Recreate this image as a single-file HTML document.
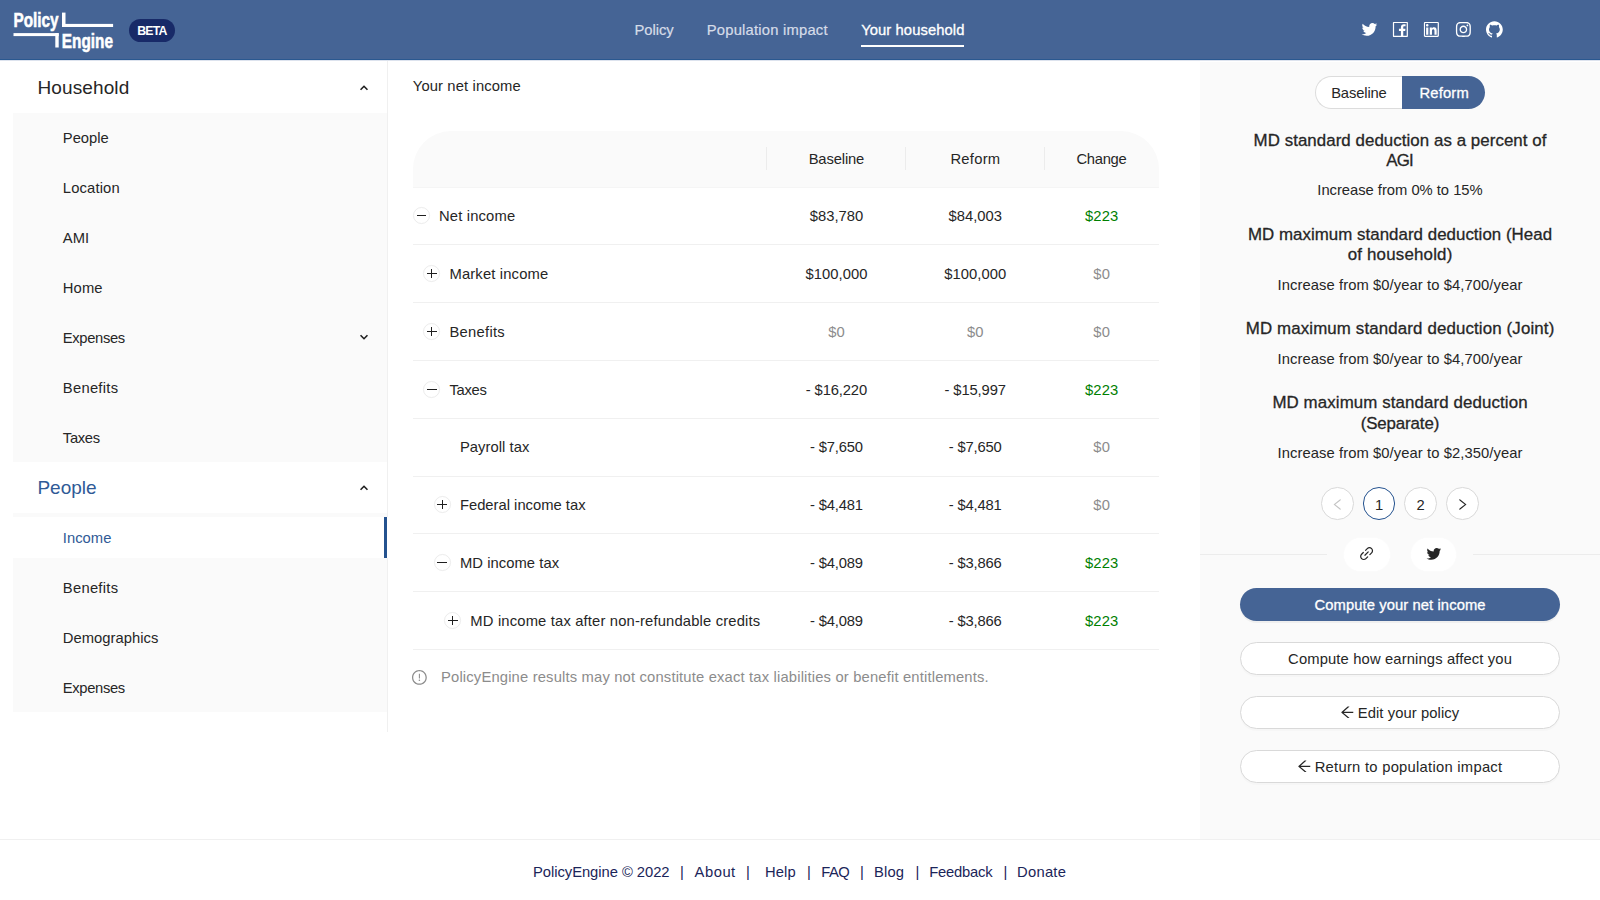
<!DOCTYPE html>
<html lang="en"><head><meta charset="utf-8"><title>PolicyEngine - Your household</title>
<style>
*{margin:0;padding:0}
html,body{width:1600px;height:900px;overflow:hidden;background:#fff}
body{position:relative;font-family:"Liberation Sans", sans-serif;font-size:14.77px;color:#262626}
header,aside,main,section,footer{position:absolute;display:block}
.hdr{left:0;top:0;width:1600px;height:60px;background:#456495;border-bottom:1px solid #2a5890;box-sizing:border-box}
.side{left:0;top:60px;width:388px;height:779px}
.main{left:388px;top:60px;width:812px;height:779px}
.rp{left:1200px;top:60px;width:400px;height:779px;background:linear-gradient(#fff 2px,#fafafa 2px)}
.ft{left:0;top:839px;width:1600px;height:61px;border-top:1px solid #f0f0f0;box-sizing:border-box}
.t{position:absolute;white-space:pre;line-height:1;display:block}
.r{position:absolute}
.ic{position:absolute;display:block;overflow:visible}
.xb{position:absolute;width:16.8px;height:16.8px;border:1px solid #ececec;border-radius:50%;box-sizing:border-box;background:#fff}
.xb i{position:absolute;background:#1f1f1f;display:block}
.xb .hz{left:2.6px;right:2.6px;top:6.75px;height:1.3px}
.xb .vt{top:2.6px;bottom:2.6px;left:6.75px;width:1.3px}
</style></head>
<body>
<header class="hdr"><svg class="ic" style="left:12px;top:10px;width:104px;height:44px" viewBox="12 10 104 44">
<g fill="#fff" stroke="#fff" stroke-width="0" font-family="Liberation Sans, sans-serif" font-weight="700" font-size="20.2px">
<text x="13.4" y="27" textLength="45.2" lengthAdjust="spacingAndGlyphs" stroke-width="0.55">Policy</text>
<text x="61.8" y="47.5" textLength="51.2" lengthAdjust="spacingAndGlyphs" stroke-width="0.55">Engine</text>
<rect x="62" y="12.6" width="3.5" height="14.4"/><rect x="62" y="23.9" width="51.1" height="3.1"/>
<rect x="13.5" y="33.1" width="45.2" height="3"/><rect x="55.3" y="33.1" width="3.4" height="14.4"/>
</g></svg><div class="r" style="left:129.30px;top:19.20px;width:45.90px;height:22.60px;background:#182a68;border-radius:12px"></div><span class="t" style="left:137.22px;top:25.00px;font-size:12.3px;font-weight:700;color:#fff;letter-spacing:-0.800px;">BETA</span><span class="t" style="left:634.60px;top:23.00px;color:#d6dce8;letter-spacing:-0.078px;-webkit-text-stroke:0.2px currentColor;">Policy</span><span class="t" style="left:706.80px;top:23.00px;color:#d6dce8;letter-spacing:0.209px;-webkit-text-stroke:0.2px currentColor;">Population impact</span><span class="t" style="left:861.20px;top:23.00px;-webkit-text-stroke:0.3px currentColor;color:#fff;letter-spacing:0.089px;">Your household</span><div class="r" style="left:861.40px;top:44.70px;width:103.00px;height:2.20px;background:#fff;"></div><svg class="ic" style="left:1360.60px;top:21.10px;width:16.8px;height:16.8px;" viewBox="64 64 896 896" fill="#fff"><path d="M928 254.3c-30.600 13.200-63.900 22.700-98.200 26.400a170.100 170.100 0 0 0 75-94 336.640 336.640 0 0 1-108.200 41.200A170.100 170.100 0 0 0 672 174c-94.500 0-170.500 76.600-170.500 170.600 0 13.200 1.600 26.400 4.200 39.100-141.500-7.400-267.700-75-351.600-178.500a169.320 169.320 0 0 0-23.200 86.100c0 59.200 30.100 111.400 76 142.100a172 172 0 0 1-77.100-21.700v2.100c0 82.900 58.600 151.600 136.700 167.400a180.600 180.600 0 0 1-44.900 5.800c-11.100 0-21.600-1.100-32.200-2.600C211 652 273.900 701.100 348.800 702.700c-58.600 45.900-132 72.900-211.700 72.900-14.300 0-27.500-.5-41.200-2.100C171.500 822 261.200 850 357.800 850 671.400 850 843 590.200 843 364.700c0-7.400 0-14.800-.5-22.200 33.200-24.300 62.300-54.400 85.500-88.200z"/></svg><svg class="ic" style="left:1392.10px;top:21.10px;width:16.8px;height:16.8px;" viewBox="64 64 896 896" fill="#fff"><path d="M880 112H144c-17.700 0-32 14.300-32 32v736c0 17.700 14.300 32 32 32h736c17.700 0 32-14.300 32-32V144c0-17.700-14.300-32-32-32zm-32 736H663.900V602.200h104l15.600-120.700H663.900v-77.100c0-35 9.700-58.800 59.800-58.800h63.900v-108c-11.100-1.500-49-4.800-93.200-4.800-92.200 0-155.300 56.300-155.300 159.600v89H434.900v120.700h104.300V848H176V176h672v672z"/></svg><svg class="ic" style="left:1423.40px;top:21.10px;width:16.8px;height:16.8px;" viewBox="64 64 896 896" fill="#fff"><path d="M847.700 112H176.300c-35.500 0-64.300 28.800-64.300 64.300v671.400c0 35.500 28.800 64.300 64.300 64.300h671.400c35.500 0 64.300-28.800 64.300-64.300V176.300c0-35.500-28.800-64.300-64.300-64.300zm0 736c-447.800-.1-671.700-.2-671.700-.3.100-447.800.2-671.700.3-671.700 447.800.1 671.700.2 671.700.3-.1 447.800-.2 671.700-.3 671.700zM230.600 411.900h118.700v381.800H230.600zm59.400-52.200c37.900 0 68.800-30.800 68.800-68.800a68.800 68.800 0 1 0-137.600 0c0 38 30.800 68.800 68.800 68.800zm252.300 245.100c0-49.800 9.500-98 71.200-98 60.800 0 61.700 56.900 61.700 101.200v185.700h118.600V584.300c0-102.800-22.200-181.900-142.300-181.900-57.700 0-96.400 31.700-112.300 61.700h-1.600v-52.200H423.700v381.800h118.600V604.800z"/></svg><svg class="ic" style="left:1454.80px;top:21.10px;width:16.8px;height:16.8px;" viewBox="64 64 896 896" fill="#fff"><path d="M512 306.900c-113.500 0-205.100 91.600-205.100 205.100S398.500 717.100 512 717.100 717.100 625.500 717.100 512 625.500 306.900 512 306.900zm0 338.400c-73.400 0-133.300-59.900-133.300-133.300S438.600 378.700 512 378.700 645.300 438.600 645.300 512 585.400 645.300 512 645.300zm213.500-394.600c-26.500 0-47.900 21.400-47.900 47.900s21.400 47.900 47.900 47.900 47.900-21.300 47.900-47.900a47.840 47.840 0 0 0-47.900-47.900zM911.800 512c0-55.200.5-109.900-2.600-165-3.100-64-17.700-120.800-64.500-167.600-46.900-46.900-103.600-61.400-167.600-64.500-55.200-3.100-109.900-2.600-165-2.600-55.200 0-109.900-.5-165 2.600-64 3.100-120.800 17.700-167.600 64.500C132.600 226.300 118.100 283 115 347c-3.100 55.200-2.600 109.900-2.600 165s-.5 109.900 2.600 165c3.100 64 17.700 120.800 64.500 167.600 46.900 46.900 103.600 61.400 167.600 64.500 55.200 3.100 109.900 2.600 165 2.600 55.200 0 109.900.5 165-2.600 64-3.100 120.800-17.700 167.600-64.500 46.900-46.900 61.400-103.600 64.500-167.600 3.200-55.100 2.600-109.800 2.600-165zm-88 235.800c-7.300 18.200-16.100 31.800-30.200 45.800-14.100 14.100-27.600 22.900-45.800 30.200C695.200 844.700 570.300 840 512 840c-58.300 0-183.300 4.700-235.900-16.100-18.200-7.300-31.800-16.100-45.800-30.200-14.100-14.100-22.900-27.600-30.200-45.800C179.300 695.200 184 570.300 184 512c0-58.300-4.700-183.300 16.100-235.900 7.300-18.200 16.100-31.800 30.200-45.800s27.600-22.900 45.800-30.200C328.700 179.300 453.700 184 512 184s183.300-4.700 235.900 16.100c18.200 7.300 31.800 16.100 45.800 30.200 14.100 14.100 22.900 27.600 30.200 45.800C844.700 328.700 840 453.700 840 512c0 58.300 4.700 183.200-16.200 235.800z"/></svg><svg class="ic" style="left:1485.90px;top:21.10px;width:16.8px;height:16.8px;" viewBox="64 64 896 896" fill="#fff"><path d="M511.600 76.300C264.300 76.200 64 276.400 64 523.500 64 718.900 189.300 885 363.800 946c23.500 5.900 19.900-10.800 19.900-22.200v-77.500c-135.700 15.900-141.200-73.900-150.300-88.900C215 726 171.500 718 184.500 703c30.900-15.900 62.400 4 98.900 57.900 26.400 39.100 77.900 32.500 104 26 5.700-23.500 17.900-44.500 34.700-60.800-140.600-25.200-199.200-111-199.200-213 0-49.500 16.300-95 48.300-131.700-20.400-60.500 1.900-112.300 4.900-120 58.100-5.200 118.500 41.600 123.200 45.300 33-8.900 70.700-13.600 112.900-13.600 42.400 0 80.200 4.900 113.500 13.900 11.300-8.600 67.300-48.800 121.300-43.900 2.900 7.700 24.700 58.300 5.500 118 32.400 36.800 48.900 82.700 48.900 132.300 0 102.200-59 188.100-200 212.900a127.500 127.500 0 0 1 38.100 91v112.500c.8 9 0 17.900 15 17.900 177.100-59.700 304.600-227 304.600-424.100 0-247.200-200.400-447.300-447.500-447.300z"/></svg></header>
<div class="r" style="left:0;top:60px;width:1600px;height:1px;background:#dde3ee;z-index:5"></div>
<aside class="side"><div class="r" style="left:387.00px;top:0.00px;width:1.00px;height:672.00px;background:#f0f0f0;"></div><div class="r" style="left:13.00px;top:52.50px;width:374.00px;height:349.50px;background:#fafafa;"></div><div class="r" style="left:13.00px;top:452.50px;width:374.00px;height:199.50px;background:#fafafa;"></div><div class="r" style="left:13.00px;top:457.00px;width:374.50px;height:41.00px;background:#fff;"></div><div class="r" style="left:384.40px;top:456.60px;width:3.00px;height:41.70px;background:#24528f;"></div><span class="t h" style="left:37.40px;top:18.00px;font-size:19.0px;letter-spacing:0.128px;">Household</span><svg class="ic" style="left:357.60px;top:21.90px;width:12px;height:12px" viewBox="-6 -6 12 12"><polyline points="-3.45,1.725 0,-1.725 3.45,1.725" fill="none" stroke="#1f1f1f" stroke-width="1.6"/></svg><span class="t" style="left:62.80px;top:71.00px;letter-spacing:0.000px;">People</span><span class="t" style="left:62.80px;top:121.00px;letter-spacing:0.150px;">Location</span><span class="t" style="left:62.80px;top:171.00px;letter-spacing:-0.016px;">AMI</span><span class="t" style="left:62.80px;top:221.00px;letter-spacing:0.109px;">Home</span><span class="t" style="left:62.80px;top:271.00px;letter-spacing:-0.348px;">Expenses</span><span class="t" style="left:62.80px;top:321.00px;letter-spacing:0.273px;">Benefits</span><span class="t" style="left:62.80px;top:371.00px;letter-spacing:-0.303px;">Taxes</span><svg class="ic" style="left:357.60px;top:270.70px;width:12px;height:12px" viewBox="-6 -6 12 12"><polyline points="-3.45,-1.725 0,1.725 3.45,-1.725" fill="none" stroke="#1f1f1f" stroke-width="1.6"/></svg><span class="t h" style="left:37.40px;top:418.00px;font-size:19.0px;color:#305a96;letter-spacing:0.000px;">People</span><svg class="ic" style="left:357.60px;top:422.00px;width:12px;height:12px" viewBox="-6 -6 12 12"><polyline points="-3.45,1.725 0,-1.725 3.45,1.725" fill="none" stroke="#1f1f1f" stroke-width="1.6"/></svg><span class="t" style="left:62.80px;top:471.00px;color:#305a96;letter-spacing:0.026px;">Income</span><span class="t" style="left:62.80px;top:521.00px;letter-spacing:0.273px;">Benefits</span><span class="t" style="left:62.80px;top:571.00px;letter-spacing:0.030px;">Demographics</span><span class="t" style="left:62.80px;top:621.00px;letter-spacing:-0.348px;">Expenses</span></aside>
<main class="main"><span class="t" style="left:24.80px;top:19.00px;letter-spacing:0.128px;">Your net income</span><div class="r" style="left:24.50px;top:70.50px;width:746.00px;height:57.00px;background:#fafafa;border-radius:38px 38px 0 0"></div><div class="r" style="left:378.00px;top:87.00px;width:1.00px;height:23.00px;background:#ececec;"></div><div class="r" style="left:517.00px;top:87.00px;width:1.00px;height:23.00px;background:#ececec;"></div><div class="r" style="left:656.00px;top:87.00px;width:1.00px;height:23.00px;background:#ececec;"></div><span class="t th" style="left:420.64px;top:92.00px;letter-spacing:-0.133px;">Baseline</span><span class="t th" style="left:562.46px;top:92.00px;letter-spacing:0.250px;">Reform</span><span class="t th" style="left:688.39px;top:92.00px;letter-spacing:-0.263px;">Change</span><div class="r" style="left:24.50px;top:127.00px;width:746.00px;height:1.00px;background:#f5f5f5;"></div><div class="r" style="left:24.50px;top:184.25px;width:746.00px;height:1.00px;background:#f0f0f0;"></div><div class="r" style="left:24.50px;top:241.75px;width:746.00px;height:1.00px;background:#f0f0f0;"></div><div class="r" style="left:24.50px;top:299.50px;width:746.00px;height:1.00px;background:#f0f0f0;"></div><div class="r" style="left:24.50px;top:357.50px;width:746.00px;height:1.00px;background:#f0f0f0;"></div><div class="r" style="left:24.50px;top:415.50px;width:746.00px;height:1.00px;background:#f0f0f0;"></div><div class="r" style="left:24.50px;top:473.25px;width:746.00px;height:1.00px;background:#f0f0f0;"></div><div class="r" style="left:24.50px;top:530.75px;width:746.00px;height:1.00px;background:#f0f0f0;"></div><div class="r" style="left:24.50px;top:588.75px;width:746.00px;height:1.00px;background:#f0f0f0;"></div><span class="xb" style="left:25.00px;top:147.10px"><i class="hz"></i></span><span class="t" style="left:51.00px;top:149.00px;letter-spacing:0.158px;">Net income</span><span class="t" style="left:421.71px;top:149.00px;letter-spacing:0.033px;">$83,780</span><span class="t" style="left:560.51px;top:149.00px;letter-spacing:0.033px;">$84,003</span><span class="t" style="left:697.00px;top:149.00px;color:green;letter-spacing:0.113px;">$223</span><span class="xb" style="left:35.45px;top:205.10px"><i class="hz"></i><i class="vt"></i></span><span class="t" style="left:61.45px;top:207.00px;letter-spacing:0.162px;">Market income</span><span class="t" style="left:417.55px;top:207.00px;letter-spacing:0.043px;">$100,000</span><span class="t" style="left:556.35px;top:207.00px;letter-spacing:0.043px;">$100,000</span><span class="t" style="left:705.33px;top:207.00px;color:#8c8c8c;letter-spacing:0.109px;">$0</span><span class="xb" style="left:35.45px;top:263.10px"><i class="hz"></i><i class="vt"></i></span><span class="t" style="left:61.45px;top:265.00px;letter-spacing:0.273px;">Benefits</span><span class="t" style="left:440.23px;top:265.00px;color:#8c8c8c;letter-spacing:0.109px;">$0</span><span class="t" style="left:579.03px;top:265.00px;color:#8c8c8c;letter-spacing:0.109px;">$0</span><span class="t" style="left:705.33px;top:265.00px;color:#8c8c8c;letter-spacing:0.109px;">$0</span><span class="xb" style="left:35.45px;top:321.10px"><i class="hz"></i></span><span class="t" style="left:61.45px;top:323.00px;letter-spacing:-0.303px;">Taxes</span><span class="t" style="left:417.81px;top:323.00px;letter-spacing:-0.128px;">- $16,220</span><span class="t" style="left:556.61px;top:323.00px;letter-spacing:-0.128px;">- $15,997</span><span class="t" style="left:697.00px;top:323.00px;color:green;letter-spacing:0.113px;">$223</span><span class="t" style="left:71.90px;top:380.00px;letter-spacing:0.055px;">Payroll tax</span><span class="t" style="left:421.96px;top:380.00px;letter-spacing:-0.158px;">- $7,650</span><span class="t" style="left:560.76px;top:380.00px;letter-spacing:-0.158px;">- $7,650</span><span class="t" style="left:705.33px;top:380.00px;color:#8c8c8c;letter-spacing:0.109px;">$0</span><span class="xb" style="left:45.90px;top:436.10px"><i class="hz"></i><i class="vt"></i></span><span class="t" style="left:71.90px;top:438.00px;letter-spacing:0.006px;">Federal income tax</span><span class="t" style="left:421.96px;top:438.00px;letter-spacing:-0.158px;">- $4,481</span><span class="t" style="left:560.76px;top:438.00px;letter-spacing:-0.158px;">- $4,481</span><span class="t" style="left:705.33px;top:438.00px;color:#8c8c8c;letter-spacing:0.109px;">$0</span><span class="xb" style="left:45.90px;top:494.10px"><i class="hz"></i></span><span class="t" style="left:71.90px;top:496.00px;letter-spacing:0.058px;">MD income tax</span><span class="t" style="left:421.96px;top:496.00px;letter-spacing:-0.158px;">- $4,089</span><span class="t" style="left:560.76px;top:496.00px;letter-spacing:-0.158px;">- $3,866</span><span class="t" style="left:697.00px;top:496.00px;color:green;letter-spacing:0.113px;">$223</span><span class="xb" style="left:56.35px;top:552.10px"><i class="hz"></i><i class="vt"></i></span><span class="t" style="left:82.35px;top:554.00px;letter-spacing:0.163px;">MD income tax after non-refundable credits</span><span class="t" style="left:421.96px;top:554.00px;letter-spacing:-0.158px;">- $4,089</span><span class="t" style="left:560.76px;top:554.00px;letter-spacing:-0.158px;">- $3,866</span><span class="t" style="left:697.00px;top:554.00px;color:green;letter-spacing:0.113px;">$223</span><svg class="ic" style="left:24.40px;top:610.10px;width:14.8px;height:14.8px;" viewBox="64 64 896 896" fill="#8c8c8c"><path d="M512 64C264.600 64 64 264.600 64 512s200.600 448 448 448 448-200.600 448-448S759.400 64 512 64zm0 820c-205.400 0-372-166.600-372-372s166.600-372 372-372 372 166.600 372 372-166.600 372-372 372zM464 688a48 48 0 1 0 96 0 48 48 0 1 0-96 0zm24-112h48c4.400 0 8-3.600 8-8V296c0-4.400-3.600-8-8-8h-48c-4.400 0-8 3.600-8 8v272c0 4.400 3.600 8 8 8z"/></svg><span class="t" style="left:53.00px;top:610.00px;color:#8c8c8c;letter-spacing:0.167px;">PolicyEngine results may not constitute exact tax liabilities or benefit entitlements.</span></main>
<section class="rp"><div class="r" style="left:115.00px;top:16.30px;width:88.00px;height:33.00px;background:#fff;border:1px solid #dcdcdc;border-right:0;border-radius:17px 0 0 17px;box-sizing:border-box"></div><div class="r" style="left:202.20px;top:16.30px;width:82.80px;height:33.00px;background:#456495;border-radius:0 17px 17px 0"></div><span class="t" style="left:131.14px;top:26.00px;letter-spacing:-0.133px;">Baseline</span><span class="t" style="left:219.39px;top:26.00px;-webkit-text-stroke:0.3px currentColor;color:#fff;letter-spacing:0.201px;">Reform</span><span class="t pt" style="left:53.57px;top:73.00px;font-size:16.88px;-webkit-text-stroke:0.3px currentColor;letter-spacing:0.065px;">MD standard deduction as a percent of</span><span class="t pt" style="left:186.29px;top:93.00px;font-size:16.88px;-webkit-text-stroke:0.3px currentColor;letter-spacing:-0.811px;">AGI</span><span class="t pt" style="left:47.97px;top:167.00px;font-size:16.88px;-webkit-text-stroke:0.3px currentColor;letter-spacing:0.041px;">MD maximum standard deduction (Head</span><span class="t pt" style="left:147.67px;top:187.00px;font-size:16.88px;-webkit-text-stroke:0.3px currentColor;letter-spacing:0.207px;">of household)</span><span class="t pt" style="left:45.71px;top:261.00px;font-size:16.88px;-webkit-text-stroke:0.3px currentColor;letter-spacing:0.138px;">MD maximum standard deduction (Joint)</span><span class="t pt" style="left:72.38px;top:335.00px;font-size:16.88px;-webkit-text-stroke:0.3px currentColor;letter-spacing:0.113px;">MD maximum standard deduction</span><span class="t pt" style="left:160.74px;top:356.00px;font-size:16.88px;-webkit-text-stroke:0.3px currentColor;letter-spacing:-0.126px;">(Separate)</span><span class="t" style="left:117.33px;top:123.00px;letter-spacing:-0.021px;">Increase from 0% to 15%</span><span class="t" style="left:77.47px;top:218.00px;letter-spacing:0.083px;">Increase from $0/year to $4,700/year</span><span class="t" style="left:77.47px;top:292.00px;letter-spacing:0.083px;">Increase from $0/year to $4,700/year</span><span class="t" style="left:77.47px;top:386.00px;letter-spacing:0.083px;">Increase from $0/year to $2,350/year</span><div class="r" style="left:121.20px;top:427.20px;width:32.60px;height:32.60px;background:#fff;border:1px solid #d9d9d9;border-radius:50%;box-sizing:border-box"></div><div class="r" style="left:162.70px;top:427.20px;width:32.60px;height:32.60px;background:#fff;border:1px solid #24528f;border-radius:50%;box-sizing:border-box"></div><div class="r" style="left:204.30px;top:427.20px;width:32.60px;height:32.60px;background:#fff;border:1px solid #d9d9d9;border-radius:50%;box-sizing:border-box"></div><div class="r" style="left:246.20px;top:427.20px;width:32.60px;height:32.60px;background:#fff;border:1px solid #d9d9d9;border-radius:50%;box-sizing:border-box"></div><svg class="ic" style="left:130.90px;top:438.00px;width:13.0px;height:13.0px;" viewBox="64 64 896 896" fill="#c4c4c4"><path d="M724 218.300V141c0-6.700-7.700-10.400-12.900-6.300L260.300 486.800a31.860 31.860 0 0 0 0 50.300l450.800 352.100c5.300 4.100 12.900.4 12.900-6.300v-77.300c0-4.900-2.300-9.600-6.100-12.600l-360-281 360-281.100c3.800-3 6.100-7.700 6.100-12.600z"/></svg><svg class="ic" style="left:256.20px;top:438.00px;width:13.0px;height:13.0px;" viewBox="64 64 896 896" fill="#262626"><path d="M765.700 486.800L314.900 134.700A7.970 7.970 0 0 0 302 141v77.300c0 4.900 2.300 9.600 6.100 12.600l360 281.100-360 281.100c-3.900 3-6.100 7.700-6.100 12.600V883c0 6.700 7.700 10.400 12.900 6.300l450.800-352.100a31.960 31.960 0 0 0 0-50.400z"/></svg><span class="t" style="left:174.89px;top:438.00px;letter-spacing:0.109px;">1</span><span class="t" style="left:216.49px;top:438.00px;letter-spacing:0.109px;">2</span><div class="r" style="left:0.00px;top:494.00px;width:127.00px;height:1.00px;background:#ececec;"></div><div class="r" style="left:273.00px;top:494.00px;width:127.00px;height:1.00px;background:#ececec;"></div><div class="r" style="left:143.80px;top:477.60px;width:45.80px;height:33.20px;background:#fff;border-radius:17px;box-shadow:0 0 2px rgba(255,255,255,.9)"></div><div class="r" style="left:210.50px;top:477.60px;width:45.80px;height:33.20px;background:#fff;border-radius:17px;box-shadow:0 0 2px rgba(255,255,255,.9)"></div><svg class="ic" style="left:159.20px;top:486.20px;width:15.2px;height:15.2px;" viewBox="64 64 896 896" fill="#262626"><path d="M574 665.400a8.030 8.030 0 0 0-11.300 0L446.500 781.600c-53.800 53.800-144.600 59.500-204 0-59.500-59.500-53.800-150.200 0-204l116.200-116.200c3.100-3.100 3.100-8.200 0-11.300l-39.800-39.800a8.030 8.030 0 0 0-11.300 0L191.400 526.500c-84.600 84.600-84.600 221.500 0 306s221.500 84.600 306 0l116.200-116.200c3.100-3.100 3.100-8.200 0-11.300L574 665.400zm258.600-474c-84.600-84.600-221.500-84.600-306 0L410.300 307.600a8.030 8.030 0 0 0 0 11.300l39.700 39.700c3.100 3.100 8.200 3.100 11.300 0l116.200-116.200c53.800-53.800 144.600-59.500 204 0 59.500 59.500 53.800 150.200 0 204L665.300 562.600a8.030 8.030 0 0 0 0 11.300l39.800 39.800c3.100 3.100 8.200 3.100 11.300 0l116.200-116.200c84.500-84.600 84.500-221.500 0-306.100zM610.100 372.300a8.030 8.030 0 0 0-11.300 0L372.300 598.700a8.030 8.030 0 0 0 0 11.300l39.600 39.600c3.100 3.100 8.200 3.100 11.300 0l226.400-226.400c3.100-3.100 3.100-8.200 0-11.300l-39.500-39.600z"/></svg><svg class="ic" style="left:225.55px;top:485.95px;width:15.7px;height:15.7px;" viewBox="64 64 896 896" fill="#262626"><path d="M928 254.3c-30.600 13.200-63.900 22.700-98.200 26.400a170.100 170.100 0 0 0 75-94 336.640 336.640 0 0 1-108.200 41.200A170.100 170.100 0 0 0 672 174c-94.500 0-170.500 76.600-170.500 170.600 0 13.200 1.600 26.400 4.200 39.100-141.500-7.400-267.700-75-351.600-178.500a169.320 169.320 0 0 0-23.200 86.100c0 59.200 30.100 111.400 76 142.100a172 172 0 0 1-77.100-21.700v2.100c0 82.900 58.600 151.600 136.700 167.400a180.600 180.600 0 0 1-44.900 5.800c-11.100 0-21.600-1.100-32.200-2.600C211 652 273.900 701.100 348.800 702.700c-58.600 45.900-132 72.900-211.700 72.900-14.300 0-27.500-.5-41.200-2.100C171.500 822 261.200 850 357.800 850 671.400 850 843 590.200 843 364.700c0-7.400 0-14.800-.5-22.200 33.200-24.300 62.300-54.400 85.500-88.200z"/></svg><div class="r" style="left:40.00px;top:527.60px;width:320.00px;height:33.00px;background:#456495;border-radius:17px;box-shadow:0 2px 0 rgba(0,0,0,.045)"></div><div class="r" style="left:40.00px;top:581.80px;width:320.00px;height:32.80px;background:#fff;border:1px solid #d9d9d9;border-radius:17px;box-sizing:border-box;box-shadow:0 2px 0 rgba(0,0,0,.015)"></div><div class="r" style="left:40.00px;top:636.10px;width:320.00px;height:32.80px;background:#fff;border:1px solid #d9d9d9;border-radius:17px;box-sizing:border-box;box-shadow:0 2px 0 rgba(0,0,0,.015)"></div><div class="r" style="left:40.00px;top:690.10px;width:320.00px;height:32.80px;background:#fff;border:1px solid #d9d9d9;border-radius:17px;box-sizing:border-box;box-shadow:0 2px 0 rgba(0,0,0,.015)"></div><span class="t" style="left:114.44px;top:538.00px;-webkit-text-stroke:0.3px currentColor;color:#fff;letter-spacing:0.093px;">Compute your net income</span><span class="t" style="left:88.10px;top:592.00px;letter-spacing:0.136px;">Compute how earnings affect you</span><svg class="ic" style="left:139.80px;top:645.30px;width:14.6px;height:14.6px;" viewBox="64 64 896 896" fill="#262626"><path d="M872 474H286.900l350.200-304c5.600-4.900 2.200-14-5.200-14h-88.500c-3.900 0-7.600 1.400-10.500 3.900L155 487.800a31.960 31.960 0 0 0 0 48.300L535.100 866c1.500 1.300 3.300 2 5.200 2h91.500c7.400 0 10.800-9.200 5.200-14L286.900 550H872c4.400 0 8-3.600 8-8v-60c0-4.400-3.600-8-8-8z"/></svg><span class="t" style="left:157.70px;top:646.00px;letter-spacing:0.091px;">Edit your policy</span><svg class="ic" style="left:97.20px;top:699.30px;width:14.6px;height:14.6px;" viewBox="64 64 896 896" fill="#262626"><path d="M872 474H286.900l350.200-304c5.600-4.900 2.200-14-5.200-14h-88.500c-3.900 0-7.600 1.400-10.500 3.900L155 487.800a31.960 31.960 0 0 0 0 48.300L535.100 866c1.500 1.300 3.300 2 5.200 2h91.500c7.400 0 10.800-9.200 5.200-14L286.900 550H872c4.400 0 8-3.600 8-8v-60c0-4.400-3.600-8-8-8z"/></svg><span class="t" style="left:114.70px;top:700.00px;letter-spacing:0.263px;">Return to population impact</span></section>
<footer class="ft"><span class="t" style="left:533.00px;top:25.00px;color:#1b2559;letter-spacing:-0.041px;">PolicyEngine © 2022</span><span class="t" style="left:694.60px;top:25.00px;color:#1b2559;letter-spacing:0.503px;">About</span><span class="t" style="left:764.90px;top:25.00px;color:#1b2559;letter-spacing:0.145px;">Help</span><span class="t" style="left:821.20px;top:25.00px;color:#1b2559;letter-spacing:-0.464px;">FAQ</span><span class="t" style="left:873.90px;top:25.00px;color:#1b2559;letter-spacing:0.203px;">Blog</span><span class="t" style="left:929.20px;top:25.00px;color:#1b2559;letter-spacing:-0.201px;">Feedback</span><span class="t" style="left:1017.10px;top:25.00px;color:#1b2559;letter-spacing:0.232px;">Donate</span><span class="t" style="left:680.08px;top:25.00px;color:#1b2559;letter-spacing:0.141px;">|</span><span class="t" style="left:746.08px;top:25.00px;color:#1b2559;letter-spacing:0.141px;">|</span><span class="t" style="left:807.08px;top:25.00px;color:#1b2559;letter-spacing:0.141px;">|</span><span class="t" style="left:860.08px;top:25.00px;color:#1b2559;letter-spacing:0.141px;">|</span><span class="t" style="left:915.48px;top:25.00px;color:#1b2559;letter-spacing:0.141px;">|</span><span class="t" style="left:1003.48px;top:25.00px;color:#1b2559;letter-spacing:0.141px;">|</span></footer>
</body></html>
